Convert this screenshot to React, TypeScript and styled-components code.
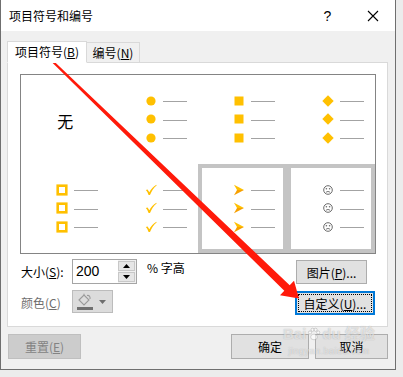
import React from 'react';
import styled, { createGlobalStyle } from 'styled-components';

const GlobalStyle = createGlobalStyle`
  html, body {
    margin: 0;
    padding: 0;
    background: #ececec;
  }
  body {
    font-family: 'Noto Sans CJK SC', 'Microsoft YaHei', sans-serif;
    font-size: 12px;
    color: #000;
  }
`;

const GOLD = '#ffc000';

type Kind = 'circle' | 'square' | 'diamond' | 'hollow' | 'check' | 'arrow' | 'smile';

const Bullet = ({ kind }: { kind: Kind }) => {
  switch (kind) {
    case 'circle':
      return (
        <svg width="12" height="12" viewBox="0 0 12 12">
          <circle cx="6" cy="6" r="4.6" fill={GOLD} />
        </svg>
      );
    case 'square':
      return (
        <svg width="12" height="12" viewBox="0 0 12 12">
          <rect x="1.5" y="1.5" width="9" height="9" fill={GOLD} />
        </svg>
      );
    case 'diamond':
      return (
        <svg width="12" height="12" viewBox="0 0 12 12">
          <polygon points="6,0.3 11.7,6 6,11.7 0.3,6" fill={GOLD} />
        </svg>
      );
    case 'hollow':
      return (
        <svg width="12" height="12" viewBox="0 0 12 12">
          <rect x="1.7" y="1.7" width="8.6" height="8.6" fill="none" stroke={GOLD} strokeWidth="2.6" />
        </svg>
      );
    case 'check':
      return (
        <svg width="12" height="12" viewBox="0 0 12 12">
          <path
            d="M0.8 6 L2.6 5.6 L4.3 8.2 C6 5.2 8.3 2.6 11.4 0.8 L11.6 1.4 C8.8 3.6 6.6 6.8 5 11 L3.6 11 C2.8 8.8 2 7.2 0.8 6 Z"
            fill={GOLD}
          />
        </svg>
      );
    case 'arrow':
      return (
        <svg width="12" height="12" viewBox="0 0 12 12">
          <polygon points="1,0.8 11,6 4,6" fill={GOLD} />
          <polygon points="4,6 11,6 1,11.2" fill="#f7a000" />
        </svg>
      );
    case 'smile':
      return (
        <svg width="12" height="12" viewBox="0 0 12 12">
          <circle cx="6" cy="6" r="4.3" fill="none" stroke="#6a6a6a" strokeWidth="1" />
          <circle cx="4.4" cy="4.8" r="0.8" fill="#6a6a6a" />
          <circle cx="7.6" cy="4.8" r="0.8" fill="#6a6a6a" />
          <path d="M4 8.2 Q6 6.6 8 8.2" fill="none" stroke="#6a6a6a" strokeWidth="0.9" />
        </svg>
      );
  }
};

const App = () => {
  const cells: { kind?: Kind; boxed?: boolean }[] = [
    {},
    { kind: 'circle' },
    { kind: 'square' },
    { kind: 'diamond' },
    { kind: 'hollow' },
    { kind: 'check' },
    { kind: 'arrow', boxed: true },
    { kind: 'smile', boxed: true },
  ];

  return (
    <Frame>
      <GlobalStyle />
      <Dialog>
        <TitleBar>
          <Title>项目符号和编号</Title>
          <TitleButton>?</TitleButton>
          <TitleButton>
            <svg width="12" height="12" viewBox="0 0 12 12">
              <path d="M1 1 L11 11 M11 1 L1 11" stroke="#000" strokeWidth="1.1" />
            </svg>
          </TitleButton>
        </TitleBar>

        <Body>
          <TabRow>
            <Tab $active $width={80}>
              项目符号(<u>B</u>)
            </Tab>
            <Tab $width={53}>
              编号(<u>N</u>)
            </Tab>
          </TabRow>

          <Panel>
            <Preview>
              {cells.map((cell, i) => (
                <Cell key={i} $boxed={cell.boxed} $empty={!cell.kind}>
                  {cell.kind ? (
                    [0, 1, 2].map((r) => (
                      <BulletRow key={r}>
                        <Slot>
                          <Bullet kind={cell.kind as Kind} />
                        </Slot>
                        <Dash />
                      </BulletRow>
                    ))
                  ) : (
                    <NoneText>无</NoneText>
                  )}
                </Cell>
              ))}
            </Preview>

            <Controls>
              <ControlRow>
                <Label>
                  大小(<u>S</u>):
                </Label>
                <SpinBox>
                  <SpinValue>200</SpinValue>
                  <SpinButtons>
                    <SpinButton>
                      <svg width="7" height="4" viewBox="0 0 7 4">
                        <polygon points="3.5,0 7,4 0,4" fill="#000" />
                      </svg>
                    </SpinButton>
                    <SpinButton>
                      <svg width="7" height="4" viewBox="0 0 7 4">
                        <polygon points="0,0 7,0 3.5,4" fill="#000" />
                      </svg>
                    </SpinButton>
                  </SpinButtons>
                </SpinBox>
                <Suffix>% 字高</Suffix>
                <Spacer />
                <Button $width={71} $height={24} $right={9}>
                  图片(<u>P</u>)...
                </Button>
              </ControlRow>

              <ControlRow>
                <Label $disabled>
                  颜色(<u>C</u>)
                </Label>
                <ColorButton>
                  <Swatch>
                    <svg width="16" height="13" viewBox="0 0 16 13">
                      <path
                        d="M2 7 L7 2 L12 7 L7 12 Z M7 2 L7 0.8 M10 2.5 C12 2 13.5 3.5 13 6"
                        fill="none"
                        stroke="#9a9a9a"
                        strokeWidth="1.1"
                      />
                    </svg>
                    <SwatchBar />
                  </Swatch>
                  <svg width="7" height="4" viewBox="0 0 7 4">
                    <polygon points="0,0 7,0 3.5,4" fill="#6e6e6e" />
                  </svg>
                </ColorButton>
                <Spacer />
                <FocusButton>
                  <FocusInner>
                    自定义(<u>U</u>)...
                  </FocusInner>
                </FocusButton>
              </ControlRow>
            </Controls>
          </Panel>

          <BottomRow>
            <Button $width={73} $height={25} $disabled>
              重置(<u>E</u>)
            </Button>
            <Spacer />
            <Button $width={78} $height={25}>
              确定
            </Button>
            <Button $width={73} $height={25}>
              取消
            </Button>
          </BottomRow>
        </Body>
      </Dialog>

      <Watermark>
        <WatermarkMain>
          Bai
          <svg width="14" height="14" viewBox="0 0 14 14">
            <g fill="rgba(255,255,255,0.6)" stroke="rgba(110,110,110,0.45)" strokeWidth="0.6">
              <ellipse cx="7" cy="10" rx="3.4" ry="2.8" />
              <circle cx="3" cy="5.5" r="1.6" />
              <circle cx="5.6" cy="2.8" r="1.6" />
              <circle cx="8.6" cy="2.8" r="1.6" />
              <circle cx="11.2" cy="5.5" r="1.6" />
            </g>
          </svg>
          du 经验
        </WatermarkMain>
        <WatermarkSub>jingyan.baidu.com</WatermarkSub>
      </Watermark>

      <Overlay width="403" height="377" viewBox="0 0 403 377">
        <polygon
          points="48.7,56.3 47.3,57.7 284.3,290.7 280,295.2 299,298.5 294,280.8 289.7,285.3"
          fill="#ff1a0a"
        />
      </Overlay>
    </Frame>
  );
};

export default App;

const Frame = styled.div`
  position: relative;
  width: 403px;
  height: 377px;
  overflow: hidden;
  background: #ececec;
`;

const Dialog = styled.div`
  width: 396px;
  height: 370px;
  box-sizing: border-box;
  border: 1px solid #6f6f6f;
  border-top: none;
  background: #f0f0f0;
  display: flex;
  flex-direction: column;
`;

const TitleBar = styled.div`
  height: 31px;
  flex-shrink: 0;
  background: #fff;
  display: flex;
  align-items: center;
  padding-left: 8px;
`;

const Title = styled.div`
  flex: 1;
  font-size: 12px;
  line-height: 14px;
`;

const TitleButton = styled.div`
  width: 45px;
  height: 31px;
  display: flex;
  align-items: center;
  justify-content: center;
  font-family: 'Liberation Sans', sans-serif;
  font-size: 14px;
`;

const Body = styled.div`
  flex: 1;
  padding: 10px 6px 0 6px;
  display: flex;
  flex-direction: column;
`;

const TabRow = styled.div`
  height: 21px;
  display: flex;
  align-items: flex-end;
`;

const Tab = styled.div<{ $active?: boolean; $width: number }>`
  position: relative;
  z-index: 1;
  box-sizing: border-box;
  width: ${({ $width }) => $width}px;
  height: ${({ $active }) => ($active ? 22 : 20)}px;
  margin-bottom: ${({ $active }) => ($active ? -1 : 0)}px;
  padding-top: ${({ $active }) => ($active ? 2 : 2)}px;
  background: ${({ $active }) => ($active ? '#fff' : '#f0f0f0')};
  border: 1px solid #d9d9d9;
  border-bottom: ${({ $active }) => ($active ? '1px solid #fff' : 'none')};
  border-left: ${({ $active }) => ($active ? '1px solid #d9d9d9' : 'none')};
  text-align: center;
  font-size: 12px;
  line-height: 16px;
  white-space: nowrap;
`;

const Panel = styled.div`
  width: 381px;
  height: 265px;
  box-sizing: border-box;
  background: #fff;
  border: 1px solid #d9d9d9;
  padding: 11px 0 0 12px;
`;

const Preview = styled.div`
  width: 356px;
  height: 180px;
  box-sizing: border-box;
  border: 1px solid #848484;
  display: grid;
  grid-template-columns: repeat(4, 1fr);
  grid-template-rows: repeat(2, 1fr);
`;

const Cell = styled.div<{ $boxed?: boolean; $empty?: boolean }>`
  border: 4px solid ${({ $boxed }) => ($boxed ? '#c4c4c4' : 'transparent')};
  display: flex;
  flex-direction: column;
  justify-content: center;
  align-items: ${({ $empty }) => ($empty ? 'center' : 'flex-start')};
  padding-left: ${({ $empty }) => ($empty ? 0 : 31)}px;
  padding-bottom: 1px;
`;

const NoneText = styled.div`
  font-size: 16px;
  line-height: 20px;
  margin-top: 3px;
`;

const BulletRow = styled.div`
  height: 18.5px;
  display: flex;
  align-items: center;
`;

const Slot = styled.div`
  width: 12px;
  height: 12px;
  display: flex;
  align-items: center;
  justify-content: center;
`;

const Dash = styled.div`
  width: 24px;
  height: 1px;
  margin: 2px 0 0 6px;
  background: #a3a3a3;
`;

const Controls = styled.div`
  width: 356px;
  margin-top: 5px;
  display: flex;
  flex-direction: column;
  gap: 6px;
`;

const ControlRow = styled.div`
  height: 25px;
  display: flex;
  align-items: center;
`;

const Label = styled.div<{ $disabled?: boolean }>`
  width: 52px;
  padding-left: 1px;
  box-sizing: border-box;
  font-size: 12px;
  color: ${({ $disabled }) => ($disabled ? '#6d6d6d' : '#000')};
  white-space: nowrap;
`;

const SpinBox = styled.div`
  width: 65px;
  height: 25px;
  box-sizing: border-box;
  border: 1px solid #a5a5a5;
  background: #fff;
  display: flex;
`;

const SpinValue = styled.div`
  flex: 1;
  padding: 3px 0 0 3px;
  font-family: 'Liberation Sans', sans-serif;
  font-size: 14px;
`;

const SpinButtons = styled.div`
  width: 17px;
  display: flex;
  flex-direction: column;
  gap: 1px;
  padding: 1px 1px 1px 0;
  background: #f0f0f0;
`;

const SpinButton = styled.div`
  flex: 1;
  box-sizing: border-box;
  border: 1px solid #c8c8c8;
  background: #e6e6e6;
  display: flex;
  align-items: center;
  justify-content: center;
`;

const Suffix = styled.div`
  align-self: flex-start;
  margin: 0 0 0 10px;
  line-height: 18px;
  font-size: 12px;
  white-space: nowrap;
`;

const Spacer = styled.div`
  flex: 1;
`;

const Button = styled.div<{ $width: number; $height: number; $right?: number; $disabled?: boolean }>`
  width: ${({ $width }) => $width}px;
  height: ${({ $height }) => $height}px;
  margin-right: ${({ $right }) => $right ?? 0}px;
  box-sizing: border-box;
  border: 1px solid ${({ $disabled }) => ($disabled ? '#bfbfbf' : '#adadad')};
  background: ${({ $disabled }) => ($disabled ? '#cccccc' : '#e1e1e1')};
  color: ${({ $disabled }) => ($disabled ? '#838383' : '#000')};
  display: flex;
  align-items: center;
  justify-content: center;
  font-size: 12px;
  white-space: nowrap;
  align-self: flex-end;
`;

const ColorButton = styled.div`
  width: 41px;
  height: 23px;
  box-sizing: border-box;
  align-self: flex-start;
  border: 1px solid #bcbcbc;
  background: #dcdcdc;
  display: flex;
  align-items: center;
  gap: 6px;
  padding-left: 4px;
`;

const Swatch = styled.div`
  display: flex;
  flex-direction: column;
  align-items: center;
`;

const SwatchBar = styled.div`
  width: 16px;
  height: 3px;
  margin-top: 1px;
  background: #707070;
`;

const FocusButton = styled.div`
  width: 80px;
  height: 24px;
  margin-right: 1px;
  box-sizing: border-box;
  align-self: flex-end;
  border: 2px solid #0078d7;
  background: #e1e1e1;
  padding: 1px;
`;

const FocusInner = styled.div`
  height: 100%;
  box-sizing: border-box;
  border: 1px dotted #000;
  display: flex;
  align-items: center;
  justify-content: center;
  font-size: 12px;
  white-space: nowrap;
`;

const BottomRow = styled.div`
  margin-top: 7px;
  height: 25px;
  display: flex;
  gap: 6px;
  padding: 0 1px 0 1px;
`;

const Watermark = styled.div`
  position: absolute;
  left: 283px;
  top: 322px;
  display: flex;
  flex-direction: column;
  align-items: center;
  pointer-events: none;
  color: rgba(255, 255, 255, 0.6);
  text-shadow: 0 0 1px rgba(90, 90, 90, 0.45);
`;

const WatermarkMain = styled.div`
  display: flex;
  align-items: center;
  gap: 1px;
  font-family: 'Liberation Sans', 'Noto Sans CJK SC', sans-serif;
  font-weight: bold;
  font-size: 15px;
  line-height: 24px;
  white-space: nowrap;
`;

const WatermarkSub = styled.div`
  font-family: 'Liberation Sans', sans-serif;
  font-size: 9px;
  line-height: 10px;
  letter-spacing: 0.5px;
`;

const Overlay = styled.svg`
  position: absolute;
  left: 0;
  top: 0;
  pointer-events: none;
`;
